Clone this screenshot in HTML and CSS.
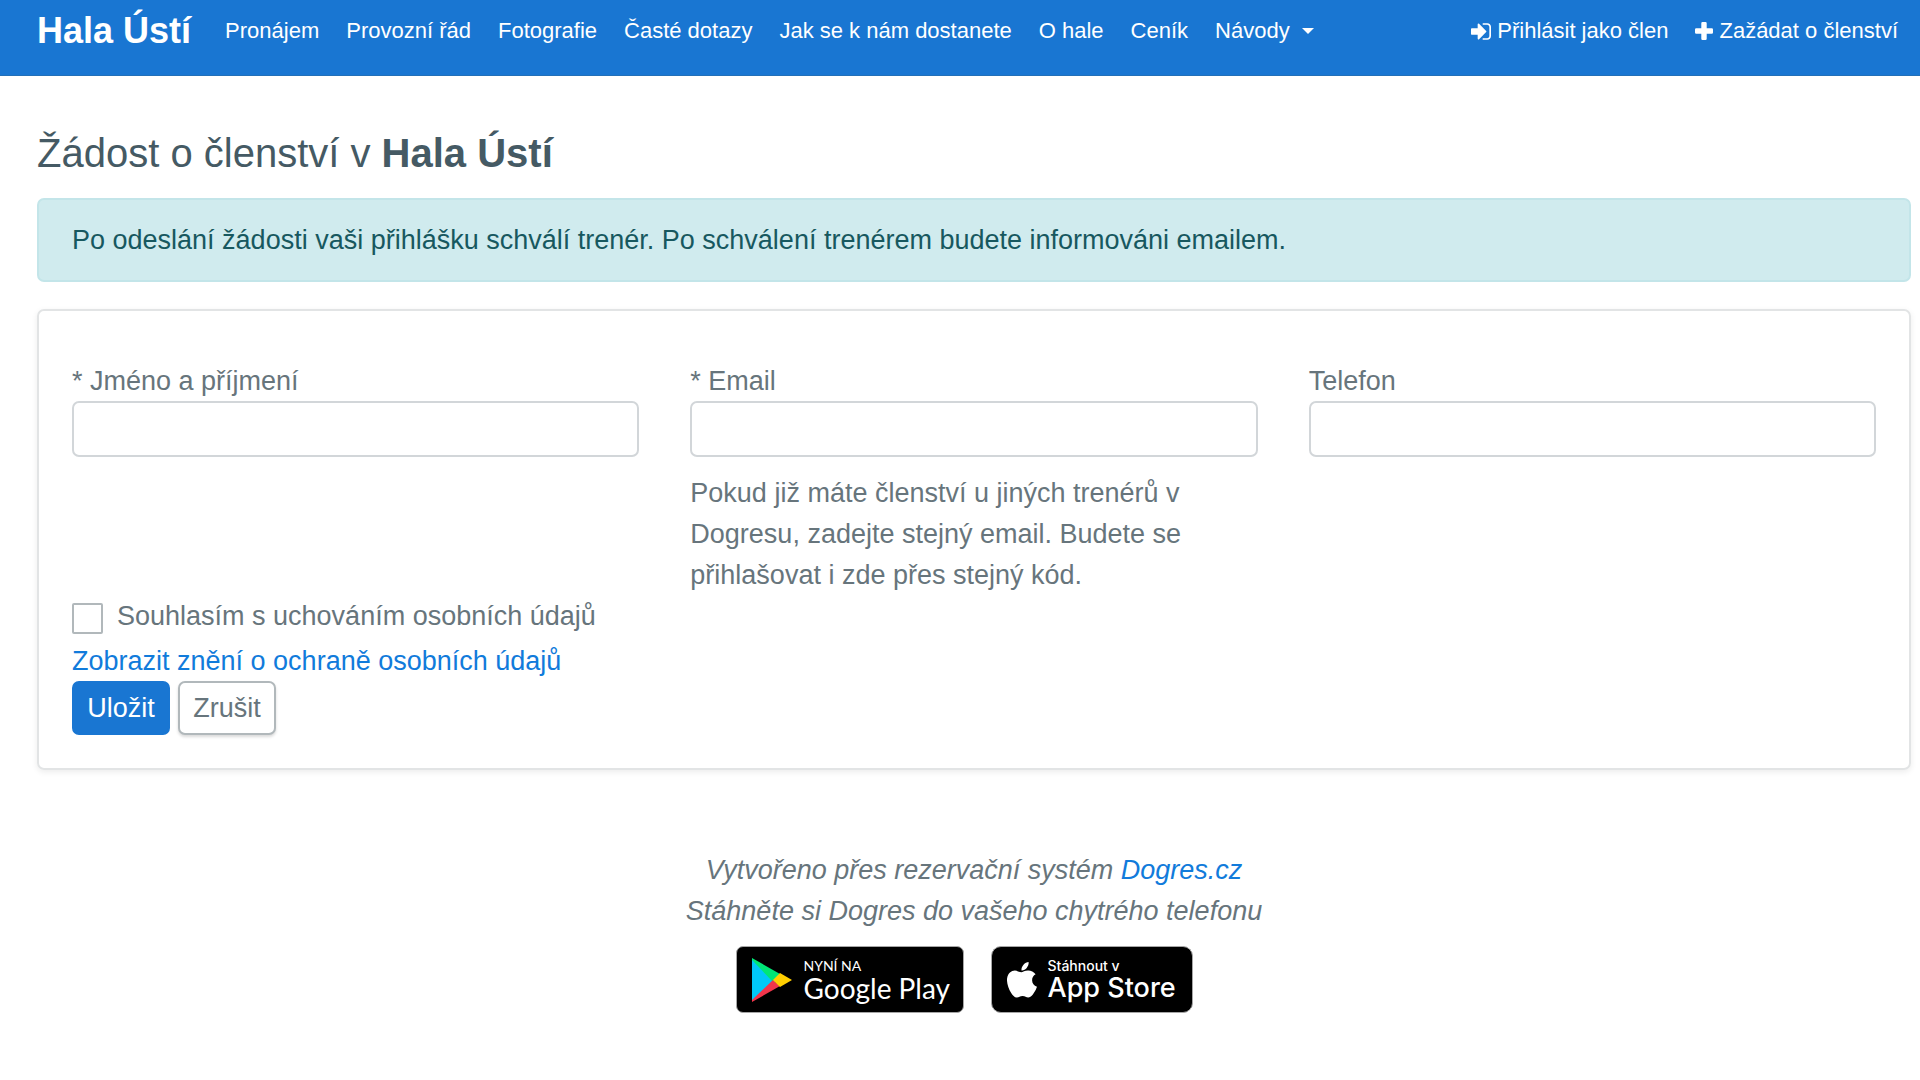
FILE: index.html
```html
<!DOCTYPE html>
<html lang="cs">
<head>
<meta charset="UTF-8">
<meta name="viewport" content="width=device-width, initial-scale=1.0">
<title>Hala Ústí - Žádost o členství</title>
<link rel="stylesheet" href="styles.css">
</head>
<body>
<header class="topbar">
    <nav class="navbar">
        <a class="brand" href="#">Hala Ústí</a>
        <ul class="nav-list">
            <li><a href="#">Pronájem</a></li>
            <li><a href="#">Provozní řád</a></li>
            <li><a href="#">Fotografie</a></li>
            <li><a href="#">Časté dotazy</a></li>
            <li><a href="#">Jak se k nám dostanete</a></li>
            <li><a href="#">O hale</a></li>
            <li><a href="#">Ceník</a></li>
            <li><a class="dropdown" href="#">Návody</a></li>
        </ul>
        <ul class="nav-list nav-right">
            <li><a href="#"><svg class="icon" viewBox="0 0 1536 1280" width="20" height="17" aria-hidden="true"><path fill="currentColor" d="M1184 640q0 26-19 45l-544 544q-19 19-45 19t-45-19-19-45V896H64q-26 0-45-19T0 832V448q0-26 19-45t45-19h448V96q0-26 19-45t45-19 45 19l544 544q19 19 19 45zm352-352v704q0 119-84 204t-204 84H928q-13 0-22-10t-10-22q0-5-1-20t0-26 4-24 11-18 18-6h320q66 0 113-47t47-113V288q0-66-47-113t-113-47H936q-18-1-26-6t-12-20-2-20 0-28 3-27 9-18 20-9h320q119 0 204 84t84 204z"/></svg>Přihlásit jako člen</a></li>
            <li><a href="#"><svg class="icon" viewBox="0 0 18 18" width="18" height="18" aria-hidden="true"><path fill="currentColor" d="M7.500 0h3q1.200 0 1.200 1.200v5.100h5.100q1.200 0 1.200 1.200v3q0 1.200-1.200 1.200h-5.100v5.100q0 1.200-1.200 1.200h-3q-1.200 0-1.200-1.200v-5.100H1.200Q0 11.700 0 10.500v-3q0-1.200 1.200-1.200h5.100V1.200Q6.300 0 7.500 0z"/></svg>Zažádat o členství</a></li>
        </ul>
    </nav>
</header>

<main class="content">
    <h1>Žádost o členství v <b>Hala Ústí</b></h1>
    <div class="alert">Po odeslání žádosti vaši přihlášku schválí trenér. Po schválení trenérem budete informováni emailem.</div>

    <form class="card">
        <div class="fields">
            <div class="field">
                <label for="name">* Jméno a příjmení</label>
                <input type="text" id="name" name="name">
            </div>
            <div class="field">
                <label for="email">* Email</label>
                <input type="email" id="email" name="email">
                <p class="help">Pokud již máte členství u jiných trenérů v Dogresu, zadejte stejný email. Budete se přihlašovat i zde přes stejný kód.</p>
            </div>
            <div class="field">
                <label for="phone">Telefon</label>
                <input type="tel" id="phone" name="phone">
            </div>
        </div>
        <div class="check">
            <input type="checkbox" id="agree" name="agree">
            <label for="agree">Souhlasím s uchováním osobních údajů</label>
        </div>
        <a class="link" href="#">Zobrazit znění o ochraně osobních údajů</a>
        <div class="buttons">
            <button type="submit" class="btn btn-primary">Uložit</button>
            <button type="button" class="btn btn-cancel">Zrušit</button>
        </div>
    </form>
</main>

<footer class="footer">
    <p>Vytvořeno přes rezervační systém <a class="link" href="#">Dogres.cz</a></p>
    <p>Stáhněte si Dogres do vašeho chytrého telefonu</p>
    <div class="stores">
        <a class="store google" href="#">
            <svg viewBox="0 0 40 44" width="40" height="44" aria-hidden="true">
                <path fill="#00c8f8" d="M0 1v42l26-21z"/>
                <path fill="#00e676" d="M0 0l28 16-7 8L0 2z"/>
                <path fill="#f0354b" d="M0 44l28-16-7-6L0 42z"/>
                <path fill="#ffce00" d="M28 15l12 7-12 7-7-7z"/>
            </svg>
            <span class="store-text"><small>NYNÍ NA</small><span>Google Play</span></span>
        </a>
        <a class="store apple" href="#">
            <svg viewBox="0 0 30 36" width="30" height="36" aria-hidden="true">
                <path fill="#fff" d="M21.600 0c.3 2.300-.6 4.300-1.900 5.900-1.300 1.600-3.300 2.700-5.200 2.500-.3-2.200.8-4.400 2-5.700C17.900 1.100 20 .1 21.600 0z"/>
                <path fill="#fff" d="M28.600 12.300c-2.200 1.300-3.500 3.200-3.500 5.900 0 3.100 1.900 5.400 4.900 6.600-.7 2.100-1.800 4.200-3.200 6.200-1.500 2.200-3 4.500-5.500 4.500-2.300 0-3-1.400-5.700-1.400s-3.600 1.400-5.700 1.500c-2.400.1-4.200-2.400-5.700-4.600C1.300 26.700-.7 20.100.2 15.800c.8-4.200 4-7.200 7.700-7.200 2.600 0 4.700 1.600 6.300 1.600 1.500 0 3.900-1.800 7-1.700 2.900.1 5.600 1.300 7.400 3.800z"/>
            </svg>
            <span class="store-text"><small>Stáhnout v</small><span>App Store</span></span>
        </a>
    </div>
</footer>
</body>
</html>
```
FILE: styles.css
```css
* {
    box-sizing: border-box;
}

body {
    margin: 0;
    background: #fff;
    color: #67757c;
    font-family: "Liberation Sans", Arial, sans-serif;
    font-size: 27px;
    line-height: 40px;
}

a {
    text-decoration: none;
}

/* horni lista */
.topbar {
    background: #1976d2;
    border-bottom: 1px solid #2370b8;
    padding: 0 22px 13px 37px;
}

.navbar {
    display: flex;
    align-items: center;
    height: 62px;
}

.brand {
    margin-right: 34px;
    color: #fff;
    font-size: 36px;
    font-weight: bold;
}

.nav-list {
    display: flex;
    gap: 27px;
    margin: 0;
    padding: 0;
    list-style: none;
    font-size: 22px;
    white-space: nowrap;
}

.nav-list a {
    display: flex;
    align-items: center;
    color: #fff;
}

.nav-right {
    margin-left: auto;
}

.icon {
    margin-right: 6px;
}

.dropdown::after {
    content: "";
    margin-left: 12px;
    border-top: 6px solid #fff;
    border-left: 6px solid transparent;
    border-right: 6px solid transparent;
}

/* obsah */
.content {
    padding: 48px 9px 0 37px;
}

h1 {
    margin: 0 0 16px;
    color: #455a64;
    font-size: 40px;
    font-weight: normal;
    line-height: 58px;
}

.alert {
    margin-bottom: 27px;
    padding: 20px 33px;
    border: 2px solid #c3e5e9;
    border-radius: 7px;
    background: #d0ebee;
    color: #17585f;
}

.card {
    padding: 50px 33px 33px;
    border: 2px solid #e2e4e5;
    border-radius: 7px;
    box-shadow: 0 2px 6px rgba(0, 0, 0, 0.08);
}

.fields {
    display: grid;
    grid-template-columns: repeat(3, 1fr);
    gap: 51px;
}

.field label {
    display: block;
}

.field input {
    display: block;
    width: 100%;
    height: 56px;
    padding: 0 20px;
    border: 2px solid #d2d6d9;
    border-radius: 7px;
    background: #fff;
    color: #67757c;
    font: inherit;
}

.help {
    margin: 16px 0 0;
    line-height: 41px;
}

.check {
    display: flex;
    align-items: center;
    gap: 14px;
    margin-bottom: 5px;
}

.check input {
    appearance: none;
    width: 31px;
    height: 31px;
    margin: 4px 0 0;
    border: 2px solid #b1b8bb;
    border-radius: 2px;
}

.check input:checked {
    background: #1976d2;
}

.link {
    color: #117bdb;
}

.buttons {
    display: flex;
    gap: 8px;
}

.btn {
    width: 98px;
    height: 54px;
    padding: 0;
    border: 2px solid #1976d2;
    border-radius: 7px;
    font: inherit;
    cursor: pointer;
}

.btn-primary {
    background: #1976d2;
    color: #fff;
}

.btn-cancel {
    border-color: #b1b8bb;
    background: #fff;
    color: #67757c;
    box-shadow: 0 2px 3px rgba(0, 0, 0, 0.15);
}

/* paticka */
.footer {
    padding: 80px 9px 60px 37px;
    line-height: 41px;
    text-align: center;
    font-style: italic;
}

.footer p {
    margin: 0;
}

.stores {
    display: flex;
    justify-content: center;
    gap: 27px;
    margin: 14px 20px 0 0;
}

.store {
    display: flex;
    align-items: center;
    height: 67px;
    border: 1px solid #a6a6a6;
    border-radius: 7px;
    background: #000;
    color: #fff;
    font-style: normal;
    text-align: left;
    white-space: nowrap;
}

.store-text {
    display: flex;
    flex-direction: column;
    line-height: 28px;
}

.store-text small {
    font-size: 14px;
    line-height: 16px;
}

.google {
    width: 228px;
    padding-left: 15px;
    gap: 12px;
    font-family: Lato, sans-serif;
    font-size: 28px;
}

.apple {
    width: 202px;
    padding-left: 15px;
    gap: 11px;
    border-radius: 10px;
    font-family: Inter, sans-serif;
    font-size: 27px;
    font-weight: 500;
}
```
